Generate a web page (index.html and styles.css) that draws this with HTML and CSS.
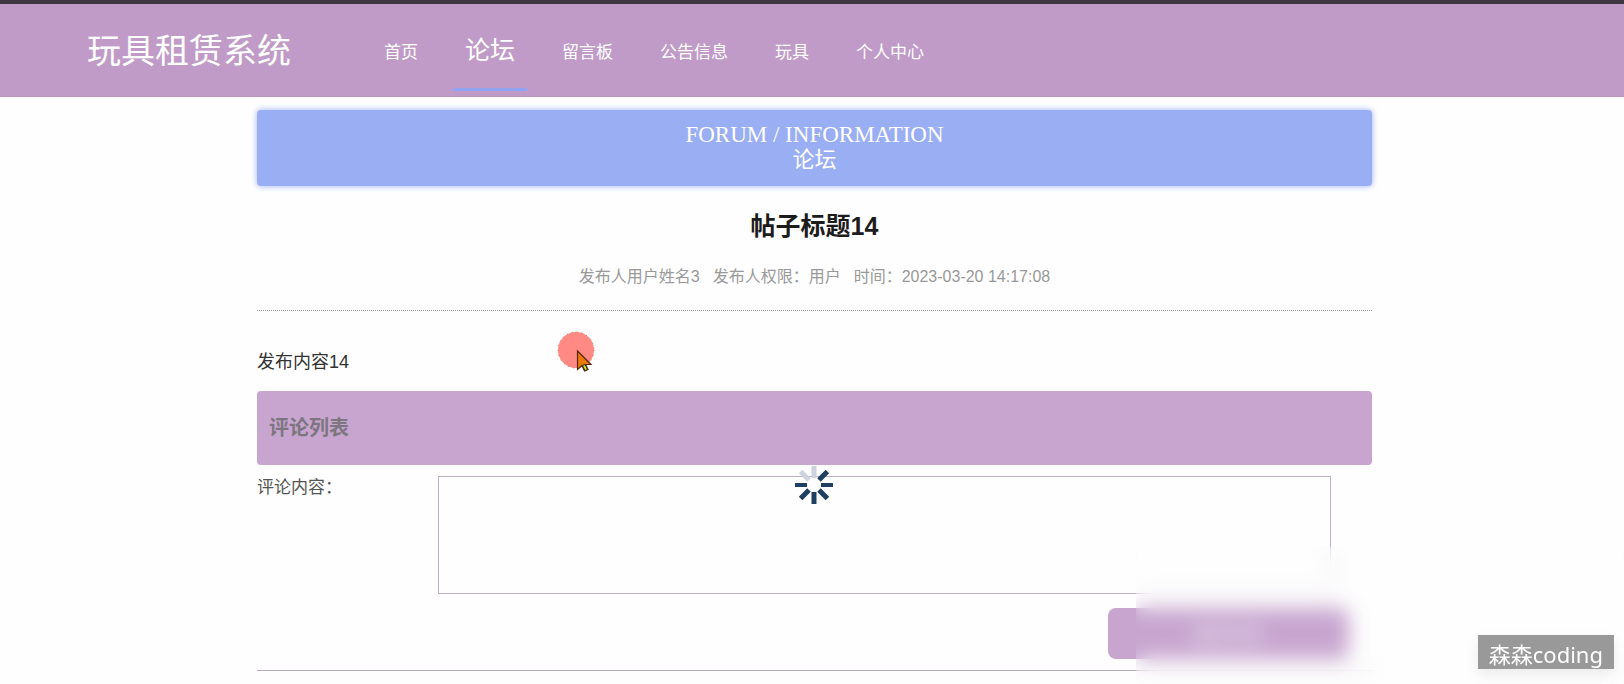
FILE: index.html
```html
<!DOCTYPE html>
<html lang="zh-CN">
<head>
<meta charset="utf-8">
<title>玩具租赁系统</title>
<link rel="stylesheet" href="styles.css">
</head>
<body>
<header class="header">
  <div class="brand">玩具租赁系统</div>
  <nav class="nav">
    <a class="nav-item" href="#">首页</a>
    <a class="nav-item active" href="#">论坛</a>
    <a class="nav-item" href="#">留言板</a>
    <a class="nav-item" href="#">公告信息</a>
    <a class="nav-item" href="#">玩具</a>
    <a class="nav-item" href="#">个人中心</a>
  </nav>
</header>
<main class="page">
  <div class="container">
    <div class="banner">
      <div class="banner-en">FORUM / INFORMATION</div>
      <div>论坛</div>
    </div>
    <h1 class="post-title">帖子标题14</h1>
    <div class="meta">
      <span>发布人用户姓名3</span>
      <span>发布人权限：用户</span>
      <span>时间：2023-03-20 14:17:08</span>
    </div>
    <p class="content">发布内容14</p>
    <h2 class="section-title">评论列表</h2>
    <form class="comment-form">
      <div class="field">
        <label class="label" for="comment">评论内容：</label>
        <textarea class="textarea" id="comment"></textarea>
      </div>
      <div class="actions"><button class="submit" type="button">提交评论</button></div>
    </form>
    <hr class="divider">
  </div>
</main>
<div class="haze"></div>
<svg class="spinner" width="40" height="40" viewBox="-20 -20 40 40" stroke="#1f3f60" stroke-width="5">
  <path d="M0-19V-7M-13.4-13.4L-5-5" stroke="#ccd3df"/>
  <path d="M5-5L13.4-13.4M0 7V19M5 5L13.4 13.4M-5 5L-13.4 13.4"/>
  <path d="M7 0H19M-7 0H-19" stroke-width="4"/>
</svg>
<svg class="pointer" width="40" height="44" viewBox="0 0 40 44">
  <circle cx="19" cy="19" r="18" fill="#ff8a84" stroke="#e8605c" stroke-dasharray="1 4"/>
  <path d="M20.500 20V38.500L25 34.500L27.500 40L31 38.500L28.500 33.500H34Z" fill="#e87a08" stroke="#5a2408" stroke-width="1.200"/>
  <path d="M25.500 34.500L28 39.500L30.500 38.500L28 33.500Z" fill="#d8e02c" stroke="#2c3408"/>
</svg>
<div class="watermark">森森coding</div>
</body>
</html>
```
FILE: styles.css
```css
* { box-sizing: border-box; }

body {
  margin: 0;
  min-height: 100vh;
  position: relative;
  overflow-x: hidden;
  background: #fefefe;
  color: #333;
  font-family: "Liberation Sans", "Noto Sans CJK SC", sans-serif;
}

.header {
  display: flex;
  height: 97px;
  padding-left: 87px;
  border-top: 4px solid #3d3640;
  border-bottom: 1px solid #b794c0;
  background: #c09bc8;
  color: #fff;
}

.brand {
  margin-right: 81px;
  font-size: 34px;
  line-height: 94px;
}

.nav { display: flex; gap: 23px; }

.nav-item {
  height: 87px;
  padding: 0 12px;
  border-bottom: 3px solid transparent;
  color: #fff;
  font-size: 17px;
  line-height: 98px;
  text-decoration: none;
}

.nav-item.active {
  border-bottom-color: #8fa4f3;
  font-size: 25px;
  line-height: 92px;
}

.page { padding: 13px 16px 0 21px; }

.container { max-width: 1115px; margin: 0 auto; }

.banner {
  padding: 12px 0 14px;
  border-radius: 4px;
  background: #9aaef4;
  box-shadow: 0 0 6px #9aaef4;
  color: #fff;
  font-family: "Liberation Serif", "Noto Sans CJK SC", serif;
  font-size: 22px;
  line-height: 25px;
  text-align: center;
}

.banner-en { font-size: 23px; }

.post-title {
  margin: 22px 0 0;
  color: #1c1c1c;
  font-size: 25px;
  line-height: 36px;
  text-align: center;
}

.meta {
  display: flex;
  justify-content: center;
  gap: 13px;
  padding: 21px 0;
  border-bottom: 1px dotted #999;
  color: #999;
  font-size: 16px;
  line-height: 24px;
}

.content {
  margin: 38px 0 0;
  font-size: 18px;
  line-height: 26px;
}

.section-title {
  margin: 16px 0 0;
  padding: 0 12px;
  border-radius: 4px;
  background: #c7a5cf;
  color: #7d7580;
  font-size: 20px;
  line-height: 74px;
}

.comment-form { margin-top: 11px; }

.field { display: flex; padding-right: 41px; }

.label {
  width: 181px;
  color: #555;
  font-size: 17px;
  line-height: 24px;
}

.textarea {
  flex: 1;
  height: 118px;
  border: 1px solid #c0b0c8;
  outline: 0;
  background: #fefefe;
  resize: none;
}

.actions {
  display: flex;
  justify-content: flex-end;
  padding: 14px 23px 0 0;
}

.submit {
  width: 241px;
  height: 51px;
  border: 0;
  border-radius: 8px;
  background: #c7a5cf;
  color: #fff;
  font: inherit;
  font-size: 17px;
}

.divider {
  margin: 11px 0 0;
  border: 0;
  border-top: 1px solid #b8a8b8;
}

.haze {
  position: absolute;
  top: 547px;
  right: 0;
  bottom: 0;
  width: 488px;
  backdrop-filter: blur(10px);
  pointer-events: none;
}

.spinner {
  position: absolute;
  top: 465px;
  left: calc(50% + 2px);
  margin-left: -20px;
}

.pointer {
  position: absolute;
  top: 331px;
  left: 557px;
}

.watermark {
  position: absolute;
  right: 10px;
  bottom: 15px;
  padding: 4px 11px 0;
  background: #999;
  box-shadow: 0 6px 14px rgba(0, 0, 0, 0.08);
  color: #fff;
  font-family: "Noto Sans", "Noto Sans CJK SC", sans-serif;
  font-size: 22px;
  line-height: 30px;
}
```
